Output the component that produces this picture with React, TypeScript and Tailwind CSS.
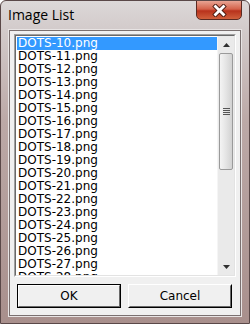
import React from "react";

const items = Array.from({ length: 19 }, (_, i) => `DOTS-${10 + i}.png`);

export default function App() {
  return (
    <div
      className="relative w-[250px] h-[324px] overflow-hidden rounded-t-[6px] border border-[#5a4848]"
      style={{
        background:
          "linear-gradient(180deg, #dcd8d8 0px, #d2caca 30px, #bca9a7 120px, #a88f8c 324px)",
        fontFamily: '"DejaVu Sans", Verdana, sans-serif',
      }}
    >
      {/* title bar */}
      <div className="h-[28px] flex items-start">
        <div
          className="pl-[7px] pt-[5px] text-[14px] text-black leading-[17px]"
          style={{ fontFamily: '"Open Sans", "Noto Sans", sans-serif' }}
        >
          Image List
        </div>
      </div>
      {/* close button */}
      <div
        className="absolute left-[195px] top-[-1px] w-[46px] h-[20px] rounded-b-[5px] border border-[#5a2a22] flex items-center justify-center"
        style={{
          background:
            "linear-gradient(180deg, #e8a493 0%, #d4624a 45%, #b8321c 55%, #d0603c 100%)",
        }}
      >
        <svg width="15" height="13" viewBox="0 0 15 13">
          <path
            d="M3.5 2.5 L11.5 10.5 M11.5 2.5 L3.5 10.5"
            stroke="#4a1a10"
            strokeWidth="4.6"
            strokeLinecap="square"
          />
          <path
            d="M3.5 2.5 L11.5 10.5 M11.5 2.5 L3.5 10.5"
            stroke="#ffffff"
            strokeWidth="2.8"
            strokeLinecap="square"
          />
        </svg>
      </div>
      {/* client */}
      <div className="mx-[7px] h-[288px] border border-[#e8e4e4] ">
        <div className="h-full border border-[#7a7070] bg-[#f0f0f0] flex flex-col px-[4px] pt-[3px]">
          {/* listbox */}
          <div className="h-[243px] border border-[#a0a0a0] border-r-[#ffffff] border-b-[#ffffff] flex">
            <div className="flex-1 flex border border-[#696969] border-r-[#e3e3e3] border-b-[#e3e3e3] bg-white">
              <div className="flex-1 overflow-hidden pt-[1px] pl-[1px]">
                {items.map((t, i) => (
                  <div
                    key={t}
                    className={`h-[13px] leading-[13px] text-[12px] pl-[1px] whitespace-nowrap ${
                      i === 0 ? "bg-[#3399ff] text-white" : "text-black"
                    }`}
                  >
                    {t}
                  </div>
                ))}
              </div>
              {/* scrollbar */}
              <div className="w-[17px] bg-[#eaeaea] flex flex-col border-l border-[#f5f5f5]">
                <div className="h-[17px] flex items-center justify-center">
                  <svg width="7" height="4" viewBox="0 0 7 4">
                    <path d="M3.5 0 L7 4 L0 4 Z" fill="#303030" />
                  </svg>
                </div>
                <div
                  className="h-[117px] mx-[1px] rounded-[2px] border border-[#9a9a9a] flex items-center justify-center"
                  style={{ background: "linear-gradient(90deg, #f4f4f4 0%, #e4e4e4 50%, #d2d2d2 100%)" }}
                >
                  <div className="flex flex-col gap-[1px]">
                    <div className="w-[7px] h-[1px] bg-[#555]" />
                    <div className="w-[7px] h-[1px] bg-[#555]" />
                    <div className="w-[7px] h-[1px] bg-[#555]" />
                    <div className="w-[7px] h-[1px] bg-[#555]" />
                  </div>
                </div>
                <div className="flex-1" />
                <div className="h-[17px] flex items-center justify-center">
                  <svg width="7" height="4" viewBox="0 0 7 4">
                    <path d="M0 0 L7 0 L3.5 4 Z" fill="#303030" />
                  </svg>
                </div>
              </div>
            </div>
          </div>
          {/* buttons */}
          <div className="flex gap-[7px] mt-[7px] px-[3px]">
            <div className="w-[104px] h-[24px] border border-[#000]">
              <div className="h-full border border-white border-r-[#696969] border-b-[#696969] bg-[#f0f0f0] flex items-center justify-center text-[12px] text-black">
                OK
              </div>
            </div>
            <div className="w-[104px] h-[24px] border border-white border-r-[#000] border-b-[#000]">
              <div className="h-full border border-[#f0f0f0] border-r-[#696969] border-b-[#696969] bg-[#f0f0f0] flex items-center justify-center text-[12px] text-black">
                Cancel
              </div>
            </div>
          </div>
        </div>
      </div>
    </div>
  );
}
